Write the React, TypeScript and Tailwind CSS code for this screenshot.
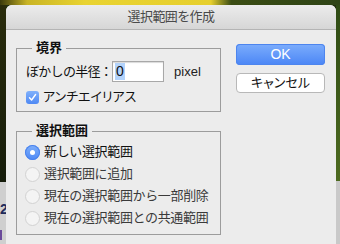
import React from "react";

const font = "font-['Liberation_Sans','Noto_Sans_CJK_JP',sans-serif]";

function Radio({ checked, label }: { checked?: boolean; label: string }) {
  return (
    <div className="flex h-[22px] items-center gap-[4px]">
      {checked ? (
        <div className="flex h-[15px] w-[15px] items-center justify-center rounded-full bg-[linear-gradient(#7fb0fb,#4d88f5)] shadow-[inset_0_0_0_1px_#4a82ec]">
          <div className="h-[5px] w-[5px] rounded-full bg-white" />
        </div>
      ) : (
        <div className="h-[15px] w-[15px] rounded-full border border-[#d2d2d2] bg-[#f4f4f4]" />
      )}
      <span className={`text-[13px] tracking-[-0.35px] ${checked ? "text-[#111]" : "text-[#3a3a3a]"}`}>{label}</span>
    </div>
  );
}

export default function App() {
  return (
    <div className={`flex h-[244px] w-[340px] flex-col overflow-hidden bg-[#22300f] ${font}`}>
      <div className="h-[5px] shrink-0 bg-[linear-gradient(90deg,#3a3a0c_0%,#c9b425_8%,#e9d331_25%,#e6cf2e_62%,#3b4d14_68%,#2e4416_100%)]" />
      <div className="flex flex-1">
        <div className="flex w-[6px] flex-col">
          <div className="h-[177px] bg-[linear-gradient(#2a2c0c,#151c0a)]" />
          <div className="flex-1 overflow-hidden bg-[#cfcfcf] text-[14px] font-bold leading-none text-[#1e2a5a]">
            <div className="mt-[20px]">2</div>
            <div className="mt-[14px] h-[10px] w-[2px] bg-[#6a4a9a]" />
          </div>
        </div>
        <div className="flex w-[330px] flex-col overflow-hidden rounded-t-[6px] bg-[#ececec]">
          <div className="flex h-[25px] shrink-0 items-center justify-center border-b border-[#b4b4b4] bg-[linear-gradient(#ececec,#d6d6d6)] text-[13px] tracking-[-0.6px] text-[#4a4a4a]">
            選択範囲を作成
          </div>
          <div className="flex gap-[15px] pl-[10px] pt-[10px]">
            <div className="flex w-[205px] flex-col gap-[11px]">
              <fieldset className="border border-[#9c9c9c] px-[9px] pb-[7px] pt-[5px]">
                <legend className="ml-[6px] px-[4px] text-[13px] font-bold leading-[16px] text-[#111]">境界</legend>
                <div className="flex h-[21px] items-center">
                  <span className="text-[13px] tracking-[-0.7px] text-[#111]">ぼかしの半径：</span>
                  <div className="flex h-[21px] w-[52px] items-center border border-[#a8a8a8] bg-white pl-[2px] shadow-[inset_0_1px_1px_rgba(0,0,0,0.15)]">
                    <span className="bg-[#b3d3fb] px-[1px] text-[14px] leading-[17px] text-[#111]">0</span>
                  </div>
                  <span className="ml-[10px] text-[13px] text-[#222]">pixel</span>
                </div>
                <div className="mt-[8px] flex h-[14px] items-center gap-[4px]">
                  <div className="flex h-[13px] w-[13px] items-center justify-center rounded-[3px] bg-[linear-gradient(#80b1fb,#4f89f4)]">
                    <svg width="9" height="9" viewBox="0 0 9 9">
                      <path d="M1.5 4.8 L3.6 7 L7.6 1.5" fill="none" stroke="white" strokeWidth="1.4" strokeLinecap="round" strokeLinejoin="round" />
                    </svg>
                  </div>
                  <span className="text-[13px] text-[#111] [font-feature-settings:'palt']">アンチエイリアス</span>
                </div>
              </fieldset>
              <fieldset className="border border-[#9c9c9c] px-[8px] pb-[5px] pt-[2px]">
                <legend className="ml-[7px] px-[4px] text-[13px] font-bold leading-[16px] text-[#111]">選択範囲</legend>
                <Radio checked label="新しい選択範囲" />
                <Radio label="選択範囲に追加" />
                <Radio label="現在の選択範囲から一部削除" />
                <Radio label="現在の選択範囲との共通範囲" />
              </fieldset>
            </div>
            <div className="flex w-[89px] flex-col gap-[8px] pt-[4px]">
              <button className="flex h-[21px] items-center justify-center rounded-[4px] bg-[linear-gradient(#7cadfc,#4b86f6)] text-[14px] text-white shadow-[inset_0_0_0_1px_#4d85ee]">
                OK
              </button>
              <button className="flex h-[20px] items-center justify-center rounded-[4px] border border-[#b8b8b8] bg-white text-[13px] text-[#111] [font-feature-settings:'palt']">
                キャンセル
              </button>
            </div>
          </div>
        </div>
        <div className="flex w-[4px] flex-col">
          <div className="h-[176px] bg-[linear-gradient(#2e4a14,#4d6a20)]" />
          <div className="flex-1 bg-[#c9c9c9]" />
        </div>
      </div>
    </div>
  );
}
